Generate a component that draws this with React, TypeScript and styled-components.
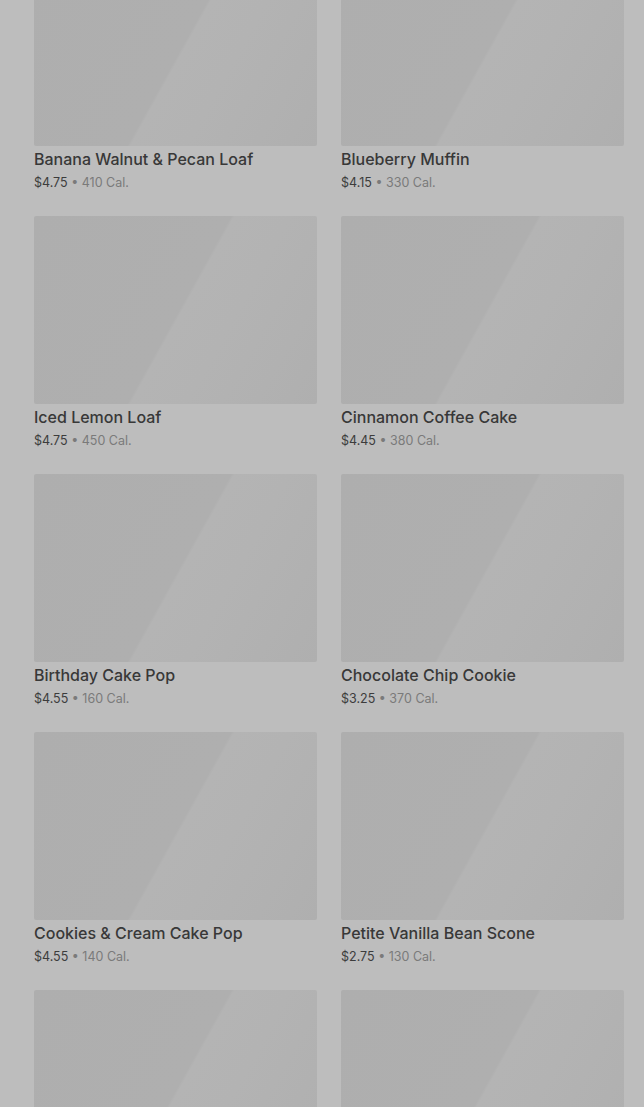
import React from "react";
import styled, { createGlobalStyle } from "styled-components";

const GlobalStyle = createGlobalStyle`
  html, body {
    margin: 0;
    padding: 0;
    overflow: hidden;
    background: #bdbdbd;
  }
  body {
    font-family: Inter, "Noto Sans", "Liberation Sans", sans-serif;
    -webkit-font-smoothing: antialiased;
  }
`;

const Page = styled.main`
  height: 1107px;
  overflow: hidden;
  background: #bdbdbd;
  padding: 0 20px 0 34px;
  box-sizing: border-box;
`;

const Grid = styled.ul`
  list-style: none;
  margin: -42px 0 0;
  padding: 0;
  display: grid;
  grid-template-columns: repeat(2, 283px);
  column-gap: 24px;
  row-gap: 24px;
`;

const Card = styled.li`
  display: flex;
  flex-direction: column;
`;

const Thumb = styled.div`
  height: 188px;
  border-radius: 2px;
  background: linear-gradient(
    119deg,
    #aeaeae 0%,
    #afafaf 51%,
    #b4b4b4 51.8%,
    #b3b3b3 66%,
    #b1b1b1 84%,
    #afafaf 100%
  );
`;

const Info = styled.div`
  padding-top: 1px;
  display: flex;
  flex-direction: column;
`;

const Title = styled.h3`
  margin: 0;
  font-size: 16px;
  line-height: 24px;
  font-weight: 500;
  color: #383838;
  letter-spacing: 0;
`;

const Meta = styled.p`
  margin: 2px 0 0;
  font-size: 12.5px;
  line-height: 20px;
  height: 19px;
  color: #3c3c3c;
`;

const Cal = styled.span`
  color: #7a7a7a;
`;

type Item = { name: string; price: string; cal: number };

const items: Item[] = [
  { name: "Banana Walnut & Pecan Loaf", price: "$4.75", cal: 410 },
  { name: "Blueberry Muffin", price: "$4.15", cal: 330 },
  { name: "Iced Lemon Loaf", price: "$4.75", cal: 450 },
  { name: "Cinnamon Coffee Cake", price: "$4.45", cal: 380 },
  { name: "Birthday Cake Pop", price: "$4.55", cal: 160 },
  { name: "Chocolate Chip Cookie", price: "$3.25", cal: 370 },
  { name: "Cookies & Cream Cake Pop", price: "$4.55", cal: 140 },
  { name: "Petite Vanilla Bean Scone", price: "$2.75", cal: 130 },
  { name: "Butter Croissant", price: "$3.75", cal: 260 },
  { name: "Chocolate Croissant", price: "$4.25", cal: 300 },
];

export default function App() {
  return (
    <>
      <GlobalStyle />
      <Page>
        <Grid>
          {items.map((it) => (
            <Card key={it.name}>
              <Thumb />
              <Info>
                <Title>{it.name}</Title>
                <Meta>
                  {it.price} <Cal>• {it.cal} Cal.</Cal>
                </Meta>
              </Info>
            </Card>
          ))}
        </Grid>
      </Page>
    </>
  );
}
